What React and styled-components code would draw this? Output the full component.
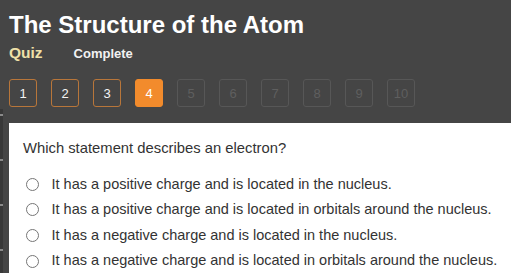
import React from "react";
import styled, { createGlobalStyle } from "styled-components";

const Global = createGlobalStyle`
  html, body { margin: 0; padding: 0; height: 100%; }
  body {
    background: #454545;
    font-family: "Liberation Sans", Arial, sans-serif;
    overflow: hidden;
  }
  #root { height: 100%; }
`;

const Page = styled.div`
  height: 100%;
  display: flex;
  flex-direction: column;
`;

const Header = styled.header`
  padding: 11px 9px 0 9px;
`;

const Title = styled.h1`
  margin: 0;
  font-size: 24px;
  line-height: 28px;
  font-weight: 700;
  color: #ffffff;
`;

const SubRow = styled.div`
  margin-top: 4px;
  display: flex;
  align-items: baseline;
  gap: 31px;
  line-height: 20px;
`;

const Kind = styled.span`
  font-size: 15.5px;
  font-weight: 700;
  color: #eee0a8;
`;

const Status = styled.span`
  font-size: 13px;
  font-weight: 700;
  color: #f2f2f2;
`;

const Steps = styled.nav`
  margin-top: 15px;
  display: flex;
  gap: 14px;
`;

const stepStyles = {
  done: { border: "#b8763a", bg: "transparent", color: "#f4f4f4" },
  current: { border: "#f28b2c", bg: "#f28b2c", color: "#ffffff" },
  todo: { border: "#575757", bg: "transparent", color: "#5f5f5f" },
};

const Step = styled.div`
  box-sizing: border-box;
  width: 28px;
  height: 28px;
  border-radius: 3px;
  border: 1px solid ${(p) => stepStyles[p.$state].border};
  background: ${(p) => stepStyles[p.$state].bg};
  color: ${(p) => stepStyles[p.$state].color};
  font-size: 13px;
  display: flex;
  align-items: center;
  justify-content: center;
`;

const Body = styled.div`
  margin-top: 2px;
  flex: 1;
  display: flex;
  min-height: 0;
`;

const EdgeStrip = styled.div`
  width: 3px;
  background: #383838;
  display: flex;
  flex-direction: column;
  padding-top: 5px;
  gap: 43px;
`;

const Tick = styled.span`
  display: block;
  width: 3px;
  height: 2px;
  background: #8a8a8a;
`;

const Panel = styled.section`
  margin: 14px 0 0 6px;
  flex: 1;
  background: #ffffff;
  padding: 15px 0 0 14px;
  color: #333333;
`;

const Question = styled.p`
  margin: 0;
  font-size: 14.8px;
  line-height: 20px;
`;

const Options = styled.div`
  margin-top: 13.5px;
  display: flex;
  flex-direction: column;
`;

const Option = styled.label`
  display: flex;
  align-items: center;
  height: 25.6px;
  font-size: 14.5px;
  line-height: 25.6px;
  white-space: nowrap;
`;

const Radio = styled.span`
  box-sizing: border-box;
  flex: none;
  width: 13px;
  height: 13px;
  margin: 0 12.5px 0 3px;
  border-radius: 50%;
  border: 1px solid #767676;
  background: #fff;
`;

const options = [
  "It has a positive charge and is located in the nucleus.",
  "It has a positive charge and is located in orbitals around the nucleus.",
  "It has a negative charge and is located in the nucleus.",
  "It has a negative charge and is located in orbitals around the nucleus.",
];

export default function App() {
  const steps = Array.from({ length: 10 }, (_, i) => i + 1);
  return (
    <Page>
      <Global />
      <Header>
        <Title>The Structure of the Atom</Title>
        <SubRow>
          <Kind>Quiz</Kind>
          <Status>Complete</Status>
        </SubRow>
        <Steps>
          {steps.map((n) => (
            <Step key={n} $state={n < 4 ? "done" : n === 4 ? "current" : "todo"}>
              {n}
            </Step>
          ))}
        </Steps>
      </Header>
      <Body>
        <EdgeStrip>
          <Tick />
          <Tick />
          <Tick />
          <Tick />
        </EdgeStrip>
        <Panel>
          <Question>Which statement describes an electron?</Question>
          <Options>
            {options.map((o) => (
              <Option key={o}>
                <Radio />
                {o}
              </Option>
            ))}
          </Options>
        </Panel>
      </Body>
    </Page>
  );
}
